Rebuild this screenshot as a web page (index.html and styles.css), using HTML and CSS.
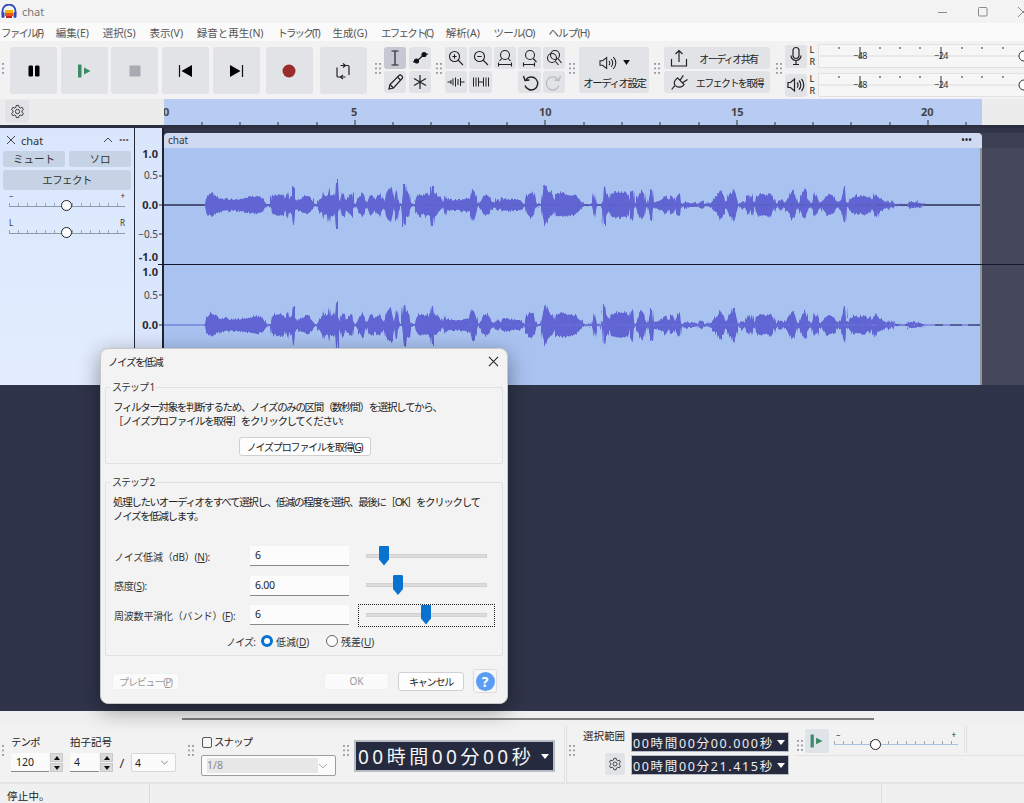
FILE: index.html
```html
<!DOCTYPE html>
<html lang="ja">
<head>
<meta charset="utf-8">
<title>chat</title>
<link rel="stylesheet" href="styles.css">
</head>
<body>
<div class="app">
  <header class="titlebar">
    <svg class="logo" viewBox="0 0 16 16"><path d="M1.5 10V7a6.5 6.5 0 0 1 13 0v3" fill="none" stroke="#2f49b8" stroke-width="1.8"/><rect x="0.5" y="8" width="3" height="6" rx="1.4" fill="#2f49b8"/><rect x="12.5" y="8" width="3" height="6" rx="1.4" fill="#2f49b8"/><rect x="4" y="6" width="8" height="3" fill="#f5b400"/><rect x="4" y="9" width="8" height="3" fill="#e8541a"/><rect x="5" y="12" width="6" height="2" fill="#c4201c"/></svg>
    <span class="title-text">chat</span>
    <div class="winctl">
      <svg width="12" height="12" viewBox="0 0 12 12"><path d="M1 6.5h9" stroke="#8a8a8a"/></svg>
      <svg width="12" height="12" viewBox="0 0 12 12"><rect x="1.5" y="1.5" width="8.500" height="8.500" rx="1" fill="none" stroke="#8a8a8a"/></svg>
      <svg width="12" height="12" viewBox="0 0 12 12"><path d="M1 1l10 10M11 1L1 11" stroke="#8a8a8a"/></svg>
    </div>
  </header>

  <nav class="menubar">
    <span class="m-k">ファイル(F)</span><span>編集(E)</span><span>選択(S)</span><span>表示(V)</span><span>録音と再生(N)</span><span class="m-k">トラック(T)</span><span>生成(G)</span><span class="m-k">エフェクト(C)</span><span>解析(A)</span><span class="m-s">ツール(O)</span><span class="m-s">ヘルプ(H)</span>
  </nav>

  <section class="toolbar">
    <i class="grip grip-first"></i>
    <div class="transport">
      <button class="tbtn"><svg viewBox="0 0 24 24" width="24" height="24"><rect x="6.500" y="6.500" width="4.500" height="11" rx="1.300"/><rect x="13" y="6.500" width="4.500" height="11" rx="1.300"/></svg></button>
      <button class="tbtn"><svg viewBox="0 0 24 24" width="24" height="24" fill="#3f8a66"><rect x="6" y="5.500" width="3.500" height="13" rx="0.500"/><path d="M12 8.500l6.500 3.500-6.500 3.500z"/></svg></button>
      <button class="tbtn"><svg viewBox="0 0 24 24" width="24" height="24"><rect x="6.500" y="6.500" width="11" height="11" fill="#a9aab4"/></svg></button>
      <button class="tbtn"><svg viewBox="0 0 24 24" width="24" height="24"><path d="M5.500 6v12" stroke="#111" stroke-width="1.200"/><path d="M18 6v12L7.500 12z" fill="#000"/></svg></button>
      <button class="tbtn"><svg viewBox="0 0 24 24" width="24" height="24"><path d="M18.500 6v12" stroke="#111" stroke-width="1.200"/><path d="M6 6v12l10.500-6z" fill="#000"/></svg></button>
      <button class="tbtn tbtn-rec"><svg viewBox="0 0 24 24" width="24" height="24"><circle cx="12" cy="12" r="6.500" fill="#9b2c2c"/></svg></button>
      <button class="tbtn tbtn-loop"><svg viewBox="0 0 24 24" width="24" height="24" fill="none" stroke="#222" stroke-width="1.200"><path d="M9.500 6.500H17a1 1 0 0 1 1 1V16M14.500 18H7a1 1 0 0 1-1-1V8.500"/><path d="M12 4.500l2.500 2-2.500 2M12 16l-2.500 2 2.500 2" stroke-width="1.100"/></svg></button>
    </div>
    <i class="grip grip-tools"></i>
    <div class="tools">
      <button class="sbtn sbtn-on"><svg viewBox="0 0 22 22" width="22" height="22" fill="none" stroke="#222" stroke-width="1.200"><path d="M7.500 4h7M11 4v14M7.500 18h7"/></svg></button>
      <button class="sbtn"><svg viewBox="0 0 22 22" width="22" height="22" fill="none" stroke="#111" stroke-width="1.200"><path d="M4 15l4-1 7-6.500 4-.5"/><circle cx="7.500" cy="14" r="2" fill="#111"/><circle cx="15" cy="7.500" r="2" fill="#111"/></svg></button>
      <button class="sbtn"><svg viewBox="0 0 22 22" width="22" height="22" fill="none" stroke="#222" stroke-width="1.200"><path d="M5 18l1-4.500L15 4.500a1.500 1.500 0 0 1 2.300 0l.8.800a1.500 1.500 0 0 1 0 2.200L9.500 17z"/><path d="M13.500 6l3 3M6 13.500L9.500 17"/></svg></button>
      <button class="sbtn"><svg viewBox="0 0 22 22" width="22" height="22" fill="none" stroke="#222" stroke-width="1.200"><path d="M11 4v14M5 7.500l12 7M17 7.500l-12 7"/></svg></button>
    </div>
    <i class="grip"></i>
    <div class="zooms">
      <button class="sbtn"><svg viewBox="0 0 22 22" width="22" height="22" fill="none" stroke="#222" stroke-width="1.100"><circle cx="9.500" cy="9.500" r="5"/><path d="M13 13l5 5M7.300 9.500h4.400M9.500 7.300v4.400"/></svg></button>
      <button class="sbtn"><svg viewBox="0 0 22 22" width="22" height="22" fill="none" stroke="#222" stroke-width="1.100"><circle cx="9.500" cy="9.500" r="5"/><path d="M13 13l5 5M7.300 9.500h4.400"/></svg></button>
      <button class="sbtn"><svg viewBox="0 0 22 22" width="22" height="22" fill="none" stroke="#222" stroke-width="1.100"><circle cx="11" cy="8" r="4.500"/><path d="M7.800 11.500L5.500 14M14.200 11.500l2.300 2.500M4.500 17.500h13M4.500 15.500v4M17.500 15.500v4"/></svg></button>
      <button class="sbtn"><svg viewBox="0 0 22 22" width="22" height="22" fill="none" stroke="#222" stroke-width="1.100"><circle cx="11" cy="8" r="4.500"/><path d="M14.200 11.500l3.300 3.500M4.500 17.500h11M4.500 15.500v4M15.500 15.500v4"/></svg></button>
      <button class="sbtn"><svg viewBox="0 0 22 22" width="22" height="22" fill="none" stroke="#222" stroke-width="1.100"><circle cx="12" cy="8" r="4.500"/><circle cx="9" cy="11" r="4.500"/><path d="M15 11.500l3.500 4.500M12.500 14.500l3 3.500"/></svg></button>
      <button class="sbtn"><svg viewBox="0 0 22 22" width="22" height="22" fill="none" stroke="#222" stroke-width="1"><path d="M2.500 11h3.500M6 9v4M8 7.500v7M10.500 6.500v9M13 8v6M15.500 7v8M15.500 11h4"/></svg></button>
      <button class="sbtn"><svg viewBox="0 0 22 22" width="22" height="22" fill="none" stroke="#222" stroke-width="1"><path d="M3.500 6.500v9M6 6.500v9M8.500 6.500v9M8.500 11h5M13.500 6.500v9M16 6.500v9M18.500 6.500v9"/></svg></button>
      <span class="sbtn-empty"></span>
      <button class="sbtn"><svg viewBox="0 0 22 22" width="22" height="22" fill="none" stroke="#222" stroke-width="1.400"><path d="M7 8.500a6.500 6.500 0 1 1-1 6M4.500 5l1.500 4.500 4.500-.5"/></svg></button>
      <button class="sbtn"><svg viewBox="0 0 22 22" width="22" height="22" fill="none" stroke="#b9bac0" stroke-width="1.300"><path d="M15 8.500a6.500 6.500 0 1 0 1 6M17.500 5L16 9.500 11.500 9"/></svg></button>
    </div>
    <i class="grip"></i>
    <button class="audio-setup">
      <span class="audio-icon"><svg viewBox="0 0 22 18" width="20" height="16" fill="none" stroke="#222" stroke-width="1.200"><path d="M2 6.500h3L9.500 3v12L5 11.500H2z"/><path d="M12 6.500a3.500 3.500 0 0 1 0 5M14.500 4.500a6.500 6.500 0 0 1 0 9M17 2.500a9 9 0 0 1 0 13"/></svg><svg viewBox="0 0 8 6" width="7" height="5"><path d="M0 0h8L4 6z" fill="#111"/></svg></span>
      <span class="audio-label">オーディオ設定</span>
    </button>
    <i class="grip"></i>
    <div class="share">
      <button class="wbtn"><svg viewBox="0 0 18 20" width="18" height="20" fill="none" stroke="#222" stroke-width="1.200"><path d="M1.500 11v7h15v-7M9 14V3M5.500 6L9 2.500 12.500 6"/></svg><span>オーディオ共有</span></button>
      <button class="wbtn"><svg viewBox="0 0 24 20" width="20" height="18" fill="none" stroke="#222" stroke-width="1.400"><path d="M6 14C3 10 7 7 9 5l8 8c-2 3-7 5-11 1zM12 8l4-6M15 11l6-4M6 14l-4 5"/></svg><span>エフェクトを取得</span></button>
    </div>
    <i class="grip grip-meter"></i>
    <div class="meters">
      <div class="meter-row">
        <button class="mbtn"><svg viewBox="0 0 22 22" width="22" height="22" fill="none" stroke="#222" stroke-width="1.200"><rect x="8" y="2.500" width="6" height="11" rx="3"/><path d="M6 10.500a5 5 0 0 0 10 0M11 15.500v4M8 19.500h6"/></svg></button>
        <span class="lr"><b>L</b><b>R</b></span>
        <svg class="meter" viewBox="0 0 207 24"><rect x="0.500" y="0.500" width="210" height="23" fill="#f6f6f6" stroke="#e2e2e2"/><path d="M0 12h207" stroke="#dcdcdc"/><path d="M21 3v2M62 3v2M82 3v2M102 3v2M144 3v2M164 3v2M185 3v2M42 3v12M123 3v12" stroke="#333"/><text x="42" y="15" class="mtext" text-anchor="middle">−48</text><text x="123" y="15" class="mtext" text-anchor="middle">−24</text><circle cx="206" cy="12" r="5" fill="#fff" stroke="#333"/></svg>
      </div>
      <div class="meter-row meter-row-b">
        <button class="mbtn"><svg viewBox="0 0 22 22" width="22" height="22" fill="none" stroke="#222" stroke-width="1.200"><path d="M3 8.500h2.500L9.500 5v12l-4-3.500H3z"/><path d="M12 8.500a3.500 3.500 0 0 1 0 5M14 6.500a6.500 6.500 0 0 1 0 9M16.500 5a9 9 0 0 1 0 12"/></svg></button>
        <span class="lr"><b>L</b><b>R</b></span>
        <svg class="meter" viewBox="0 0 207 24"><rect x="0.500" y="0.500" width="210" height="23" fill="#f6f6f6" stroke="#e2e2e2"/><path d="M0 12h207" stroke="#dcdcdc"/><path d="M21 3v2M62 3v2M82 3v2M102 3v2M144 3v2M164 3v2M185 3v2M42 3v12M123 3v12" stroke="#333"/><text x="42" y="15" class="mtext" text-anchor="middle">−48</text><text x="123" y="15" class="mtext" text-anchor="middle">−24</text><circle cx="206" cy="12" r="5" fill="#fff" stroke="#333"/></svg>
      </div>
    </div>
  </section>

  <section class="timeline">
    <div class="timeline-left">
      <button class="gear-btn"><svg viewBox="0 0 16 16" width="15" height="15" fill="none" stroke="#333" stroke-width="1"><path d="M6.700 1.500h2.600l.4 2 1.400.8 1.900-.7 1.300 2.300-1.500 1.300v1.600l1.500 1.300-1.300 2.300-1.900-.7-1.400.8-.4 2H6.700l-.4-2-1.400-.8-1.900.7-1.300-2.300L3.200 8.800V7.200L1.700 5.900 3 3.600l1.900.7 1.400-.8z"/><circle cx="8" cy="8" r="2.300"/></svg></button>
    </div>
    <svg class="time-ruler" viewBox="164 99 818 26">
      <g class="rtext"><text x="163" y="116">0</text><text x="351" y="116">5</text><text x="539" y="116">10</text><text x="731" y="116">15</text><text x="921" y="116">20</text></g>
      <path stroke="#333" d="M202 122v3M240 122v3M278 122v3M317 122v3M355 120v5M393 122v3M431 122v3M469 122v3M507 122v3M545 120v5M584 122v3M622 122v3M660 122v3M699 122v3M737 120v5M775 122v3M813 122v3M851 122v3M890 122v3M928 120v5M966 122v3"/>
    </svg>
    <div class="timeline-right"></div>
  </section>

  <div class="band"></div>

  <section class="tracks">
    <aside class="track-panel">
      <div class="track-head">
        <svg viewBox="0 0 10 10" width="10" height="10"><path d="M1 1l8 8M9 1l-8 8" stroke="#444"/></svg>
        <span class="track-name">chat</span>
        <svg class="track-up" viewBox="0 0 10 6" width="10" height="6"><path d="M1 5l4-4 4 4" fill="none" stroke="#444"/></svg>
        <span class="track-more">···</span>
      </div>
      <div class="track-btns"><button class="pbtn">ミュート</button><button class="pbtn">ソロ</button></div>
      <button class="pbtn pbtn-wide">エフェクト</button>
      <div class="pan-label pan-first"><span>−</span><span>+</span></div>
      <div class="pan-slider"><i class="pan-thumb"></i></div>
      <div class="pan-label pan-second"><span>L</span><span>R</span></div>
      <div class="pan-slider"><i class="pan-thumb"></i></div>
    </aside>
    <svg class="v-ruler" viewBox="135 128 27 257">
      <g class="vb"><text x="158" y="158">1.0</text><text x="158" y="209">0.0</text><text x="158" y="261">-1.0</text><text x="158" y="276">1.0</text><text x="158" y="329">0.0</text></g>
      <g class="vt"><text x="158" y="179">0.5</text><text x="158" y="238">−0.5</text><text x="158" y="299">0.5</text></g>
      <path stroke="#333" d="M159 176h3M159 205h3M159 234h3M159 295h3M159 325h3"/>
    </svg>
    <div class="clip">
      <div class="clip-head"><span>chat</span><b>•••</b></div>
      <svg class="wave" viewBox="164 148 818 237">
        <defs>
          <filter id="jagA" x="0" y="-20%" width="100%" height="140%"><feTurbulence type="fractalNoise" baseFrequency="0.7 0.002" numOctaves="2" seed="3"/><feDisplacementMap in="SourceGraphic" scale="6" xChannelSelector="R" yChannelSelector="G"/></filter>
          <filter id="jagB" x="0" y="-20%" width="100%" height="140%"><feTurbulence type="fractalNoise" baseFrequency="0.7 0.002" numOctaves="2" seed="11"/><feDisplacementMap in="SourceGraphic" scale="6" xChannelSelector="R" yChannelSelector="G"/></filter>
          <polygon id="env" points="204,0 205,-1 206,-7 207,-8 209,-10 212,-12 215,-9 218,-7 224,-6 232,-5.500 240,-6 246,-7 252,-8 257,-9 260,-8 263,-6 265,-3 267,-0.500 270,-0.500 271,-2 272,-9 276,-10 281,-11 284,-10 285,-5 287,-11 288,-14 289,-6 291,-9 292,-10 293,-19 294,-19 295,-6 297,-4 300,-6 304,-8 306,-9 308,-9 310,-7 312,-5 314,-2 316,-0.500 318,-2 319,-5 322,-8 323,-15 324,-11 326,-9 328,-11 329,-18 330,-10 332,-10 334,-12 335,-8 336,-24 337,-24 338,-8 340,-3 342,-12 344,-11 345,-5 347,-6 350,-10 352,-12 353,-4 355,-0.500 357,-3 359,-8 361,-10 362,-13 364,-10 365,-5 367,-2 369,-8 371,-11 373,-9 375,-5 377,-9 379,-10 380,-12 381,-8 382,-6 384,-3 385,-6 386,-12 388,-16 391,-17 392,-12 394,-2 396,-15 397,-15 398,-5 400,-1 402,-1 404,-21 405,-21 406,-12 408,-13 409,-12 410,-3 413,-1 415,-1 416,-6 418,-10 420,-11 423,-9 426,-11 429,-9 431,-12 432,-20 433,-20 434,-10 436,-11 438,-8 440,-6 443,-2 444,-6 445,-10 446,-6 452,-5 460,-5 465,-6 467,-7 470,-6 472,-16 474,-15 476,-8 478,-0.500 481,-4 483,-9 486,-11 489,-9 491,-4 494,-2 498,-6 501,-2 502,-6 508,-6 515,-5 520,-5 522,-3 524,-0.500 526,-4 527,-9 529,-12 532,-13 534,-10 535,-4 537,-1 541,-1 542,-5 543,-12 545,-21 547,-17 549,-13 551,-11 553,-9 555,-4 556,-11 558,-11 562,-12 566,-11 571,-10 575,-10 578,-7 580,-5 582,-2 585,-0.500 590,-1 592,-1 593,-6 594,-12 595,-6 596,-1 601,-0.500 603,-4 604,-20 605,-20 606,-12 608,-8 610,-5 611,-12 613,-11 615,-13 617,-12 620,-13 623,-12 626,-13 628,-9 629,-2 631,-14 633,-16 634,-2 636,-1 638,-8 640,-12 642,-15 644,-12 645,-4 648,-1 651,-16 652,-16 653,-3 655,-3 658,-4 660,-5 663,-6 665,-10 667,-7 669,-4 671,-10 673,-8 675,-3 676,-7 678,-10 680,-12 681,-2 683,-1 685,-3 690,-2 695,-2 698,-1 700,-3 702,-4 704,-1 711,-2 713,-5 715,-7 717,-8 719,-13 720,-16 722,-11 724,-9 725,-3 727,-5 729,-11 732,-12 733,-17 734,-17 736,-10 737,-6 738,-1 740,-2 743,-4 745,-2 747,-8 749,-10 750,-4 752,-11 753,-4 755,-1 756,-8 760,-11 764,-10 767,-9 770,-12 772,-8 774,-3 775,-7 776,-2 778,-2 780,-5 782,-4 784,-2 786,-4 788,-7 790,-10 792,-15 795,-11 797,-3 799,-2 802,-10 805,-15 807,-8 809,-3 812,-2 814,-12 816,-8 817,-10 819,-3 821,-2 823,-5 826,-9 829,-10 832,-9 834,-8 836,-4 838,-2 841,-5 844,-18 845,-18 846,-3 848,-2 850,-6 853,-8 856,-9 859,-8 862,-9 865,-10 868,-6 870,-9 872,-4 875,-10 876,-12 877,-8 880,-6 883,-5 885,-3 887,-2 888,-5 889,-3 892,-2 893,-4 894,-1 907,-0.500 908,-2 912,-3 920,-2 925,-0.500"/>
        </defs>
        <path class="center-dark" d="M164 205h818"/>
        <path class="center-blue" d="M164 325h818"/>
        <path class="center-dash" d="M895 325h4M905 325h6M918 325h5M935 325h8M950 325h12M968 325h14"/>
        <g class="wf">
          <g filter="url(#jagA)"><use href="#env" transform="translate(0 205)"/></g>
          <g filter="url(#jagB)"><use href="#env" transform="translate(0 205) scale(1 -1)"/></g>
          <g filter="url(#jagB)"><use href="#env" transform="translate(0 325)"/></g>
          <g filter="url(#jagA)"><use href="#env" transform="translate(0 325) scale(1 -1)"/></g>
          <use href="#env" transform="translate(0 205) scale(1 .92)"/>
          <use href="#env" transform="translate(0 205) scale(1 -.92)"/>
          <use href="#env" transform="translate(0 325) scale(1 .92)"/>
          <use href="#env" transform="translate(0 325) scale(1 -.92)"/>
        </g>
      </svg>
    </div>
    <div class="clip-edge"></div>
    <div class="track-rest"></div>
    <i class="chan-line"></i>
  </section>

  <main class="workspace"></main>

  <div class="scroll-row"><i class="scroll-thumb"></i></div>

  <section class="bottom">
    <i class="grip grip-first grip-b"></i>
    <div class="field field-tempo">
      <label>テンポ</label>
      <div class="field-row"><span class="input input-tempo">120</span><span class="spin"><i class="up"></i><i class="down"></i></span></div>
    </div>
    <div class="field field-sign">
      <label>拍子記号</label>
      <div class="field-row"><span class="input input-num">4</span><span class="spin"><i class="up"></i><i class="down"></i></span><span class="slash">/</span>
        <span class="select select-four">4<svg viewBox="0 0 10 6" width="9" height="5"><path d="M1 1l4 4 4-4" fill="none" stroke="#777"/></svg></span></div>
    </div>
    <i class="grip grip-b grip-snap"></i>
    <div class="field field-snap">
      <div class="snap-check"><i class="checkbox"></i><label>スナップ</label></div>
      <span class="select select-snap"><em>1/8</em><svg viewBox="0 0 10 6" width="10" height="6"><path d="M1 1l4 4 4-4" fill="none" stroke="#aaa"/></svg></span>
    </div>
    <i class="grip grip-b grip-time"></i>
    <div class="bigtime"><span>00時間00分00秒</span><i class="caret"></i></div>
    <i class="vsep"></i>
    <i class="grip grip-b grip-sel"></i>
    <div class="sel-labels">
      <label>選択範囲</label>
      <button class="gear-btn gear-small"><svg viewBox="0 0 16 16" width="14" height="14" fill="none" stroke="#333" stroke-width="1"><path d="M6.700 1.500h2.600l.4 2 1.400.8 1.900-.7 1.300 2.300-1.500 1.300v1.600l1.500 1.300-1.300 2.300-1.900-.7-1.400.8-.4 2H6.700l-.4-2-1.400-.8-1.900.7-1.300-2.300L3.200 8.800V7.200L1.700 5.900 3 3.600l1.900.7 1.400-.8z"/><circle cx="8" cy="8" r="2.300"/></svg></button>
    </div>
    <div class="sel-times">
      <div class="smalltime"><span>00時間00分00.000秒</span><i class="caret"></i></div>
      <div class="smalltime"><span>00時間00分21.415秒</span><i class="caret"></i></div>
    </div>
    <div class="play-area">
      <div class="play-row">
        <i class="grip grip-play"></i>
        <button class="play-btn"><svg viewBox="0 0 24 24" width="22" height="22" fill="#3f8a66"><rect x="5" y="5" width="3.500" height="14"/><path d="M11 8.500l7 3.500-7 3.500z"/></svg></button>
        <div class="speed">
          <div class="speed-label"><span>−</span><span>+</span></div>
          <div class="pan-slider speed-slider"><i class="pan-thumb"></i></div>
        </div>
        <i class="vsep vsep-play"></i>
      </div>
    </div>
  </section>

  <footer class="status">
    <span class="status-a">停止中。</span><span class="status-b"></span><span class="status-c"></span>
  </footer>

  <div class="dialog">
    <div class="dlg-title"><span>ノイズを低減</span><svg viewBox="0 0 12 12" width="11" height="11"><path d="M1 1l10 10M11 1L1 11" stroke="#222" stroke-width="1.100"/></svg></div>
    <div class="dlg-body">
      <fieldset class="step step-1">
        <legend>ステップ 1</legend>
        <p>フィルター対象を判断するため、ノイズのみの区間（数秒間）を選択してから、<br>［ノイズプロファイルを取得］をクリックしてください:</p>
        <div class="center"><button class="dbtn dbtn-profile">ノイズプロファイルを取得(<u>G</u>)</button></div>
      </fieldset>
      <fieldset class="step step-2">
        <legend>ステップ 2</legend>
        <p>処理したいオーディオをすべて選択し、低減の程度を選択、最後に［OK］をクリックして<br>ノイズを低減します。</p>
        <div class="param param-first">
          <label>ノイズ低減（dB）(<u>N</u>):</label><span class="dinput">6</span>
          <div class="dslider"><i class="dtrack"></i><i class="dthumb" style="left:20px"></i></div>
        </div>
        <div class="param">
          <label>感度(<u>S</u>):</label><span class="dinput">6.00</span>
          <div class="dslider"><i class="dtrack"></i><i class="dthumb" style="left:34px"></i></div>
        </div>
        <div class="param">
          <label>周波数平滑化（バンド）(<u>F</u>):</label><span class="dinput">6</span>
          <div class="dslider dslider-focus"><i class="dtrack"></i><i class="dthumb" style="left:62px"></i></div>
        </div>
        <div class="radios">
          <span class="radio-label">ノイズ:</span>
          <i class="radio radio-on"></i><label>低減(<u>D</u>)</label>
          <i class="radio"></i><label>残差(<u>U</u>)</label>
        </div>
      </fieldset>
      <div class="dlg-foot">
        <button class="dbtn dbtn-preview" disabled>プレビュー(<u>P</u>)</button>
        <button class="dbtn dbtn-ok" disabled>OK</button>
        <button class="dbtn dbtn-cancel">キャンセル</button>
        <button class="dbtn-help"><span>?</span></button>
      </div>
    </div>
  </div>
</div>
</body>
</html>
```
FILE: styles.css
```css
* { box-sizing: border-box; }
html, body { margin: 0; padding: 0; }
body { font-family: "Noto Sans", "Noto Sans CJK JP", sans-serif; color: #222; }
button { font: inherit; color: inherit; padding: 0; border: 0; }
i { display: block; font-style: normal; }
.app { position: relative; width: 1024px; height: 803px; overflow: hidden; display: flex; flex-direction: column; background: #f0f0f0; }

.titlebar { height: 23px; flex: none; background: #f3f3f3; display: flex; align-items: center; padding-left: 1px; }
.logo { width: 16px; height: 16px; }
.title-text { margin-left: 5px; font-size: 11px; color: #777; }
.winctl { margin-left: auto; display: flex; gap: 28px; margin-right: -5px; }

.menubar { height: 18px; flex: none; background: #fafafa; display: flex; align-items: center; gap: 13.700px; padding-left: 1px; font-size: 10.500px; color: #555; white-space: nowrap; }
.m-k { letter-spacing: -1.800px; }
.m-s { letter-spacing: -0.800px; }

.toolbar { height: 58px; flex: none; display: flex; align-items: flex-start; padding-top: 6px; background: #f2f2f2; }
.grip { flex: none; width: 6px; height: 13px; margin: 16px 3px 0 5px; background-image: radial-gradient(circle at 1px 1px, #9c9fa6 1px, transparent 1.100px); background-size: 4px 4.500px; }
.grip-first { margin: 16px 3px 0 0; width: 4px; height: 13px; margin-left: 2px; background-size: 4px 4.500px; }
.grip-tools { margin-left: 8px; }
.transport { display: flex; gap: 3.700px; margin-left: 1px; }
.tbtn { width: 47px; height: 47px; background: #e2e3e7; border-radius: 3px; display: flex; align-items: center; justify-content: center; }
.tbtn-rec { margin-left: 2.500px; }
.tbtn-loop { margin-left: 3.300px; }
.tools { display: grid; grid-template-columns: 22px 22px; grid-auto-rows: 22px; gap: 2px 3px; }
.zooms { display: grid; grid-template-columns: repeat(5, 22.500px); grid-auto-rows: 22px; gap: 2px; margin-right: -1px; }
.sbtn { width: 100%; height: 22px; background: #e2e3e7; border-radius: 3px; display: flex; align-items: center; justify-content: center; }
.sbtn-on { background: #c6c9d3; }
.audio-setup { width: 70px; height: 46px; background: #e2e3e7; border-radius: 3px; display: flex; flex-direction: column; align-items: center; margin-left: 1px; padding-top: 7px; gap: 5px; }
.audio-icon { display: flex; align-items: center; gap: 5px; height: 17px; }
.audio-label { font-size: 10.500px; letter-spacing: -1.500px; white-space: nowrap; line-height: 14px; }
.share { display: flex; flex-direction: column; gap: 2px; margin-left: 1px; }
.wbtn { width: 106px; height: 22px; background: #e2e3e7; border-radius: 3px; display: flex; align-items: center; padding: 0 2px 0 6px; font-size: 10px; letter-spacing: -1.600px; white-space: nowrap; }
.wbtn span { flex: 1; text-align: center; }
.grip-meter { margin-left: 6px; }
.meters { display: flex; flex-direction: column; margin-top: -3px; flex: 1; min-width: 0; }
.meter-row { display: flex; align-items: center; height: 24px; }
.meter-row-b { margin-top: 5px; }
.mbtn { width: 22px; height: 23px; background: #e2e3e7; border-radius: 3px; display: flex; align-items: center; justify-content: center; flex: none; }
.lr { width: 9px; flex: none; display: flex; flex-direction: column; margin-left: 2px; font-size: 9px; line-height: 12px; }
.lr b { font-weight: 400; }
.meter { width: 207px; height: 24px; flex: none; }
.mtext { font-size: 9px; letter-spacing: -0.500px; fill: #333; font-family: "Noto Sans", sans-serif; }

.timeline { height: 26px; flex: none; display: flex; background: #ececec; }
.timeline-left { width: 164px; flex: none; padding: 1px 0 0 5px; }
.gear-btn { width: 24px; height: 23px; background: #e2e3e7; border-radius: 3px; display: flex; align-items: center; justify-content: center; }
.time-ruler { width: 818px; height: 26px; flex: none; background: #b8cbf2; }
.rtext { font-size: 11px; font-weight: 700; fill: #444; font-family: "Noto Sans", sans-serif; }
.timeline-right { flex: 1; }
.band { height: 3px; flex: none; background: #2b2f40; }

.tracks { position: relative; height: 257px; flex: none; display: flex; background: #30354a; }
.track-panel { width: 135px; flex: none; background: linear-gradient(180deg, #d9e6fc, #e3edff); border-right: 1px solid #262a36; padding: 4px 3px 0; }
.track-head { display: flex; align-items: center; height: 16px; padding: 0 2px 0 3px; }
.track-name { font-size: 11px; margin-left: 5px; color: #333; }
.track-up { margin-left: auto; }
.track-more { margin-left: 6px; font-size: 12px; line-height: 10px; color: #555; font-weight: 700; }
.track-btns { display: flex; gap: 4px; margin-top: 3px; }
.pbtn { flex: 1; height: 16px; background: #c5d3e4; border-radius: 3px; font-size: 10.500px; line-height: 15px; color: #333; }
.pbtn-wide { display: block; width: 128px; height: 20px; margin-top: 3px; line-height: 19px; letter-spacing: -0.600px; }
.pan-label { display: flex; justify-content: space-between; padding: 0 6px; font-size: 8px; line-height: 8px; color: #333; }
.pan-first { margin-top: 2px; }
.pan-second { margin-top: 12px; }
.pan-slider { position: relative; height: 6px; margin: 1px 3px 0 6px; border-bottom: 1px solid #8d9aac; background-image: repeating-linear-gradient(90deg, #9aa6b6 0 1px, transparent 1px 9px); background-size: 100% 3px; background-position: bottom; background-repeat: no-repeat; width: 116px; }
.pan-thumb { position: absolute; left: 52px; top: -1px; width: 11px; height: 11px; border-radius: 50%; background: #fff; border: 1.200px solid #222; }
.v-ruler { width: 27px; height: 257px; flex: none; background: #dae6fc; }
.vb { font-size: 11px; font-weight: 700; fill: #2a2a30; text-anchor: end; font-family: "Noto Sans", sans-serif; }
.vt { font-size: 10px; fill: #444; text-anchor: end; font-family: "Noto Sans", sans-serif; }
.clip { width: 820px; flex: none; padding-top: 5px; display: flex; flex-direction: column; border-left: 2px solid #1f2330; }
.clip-head { height: 15px; flex: none; background: #d0d9f2; border-radius: 4px 4px 0 0; display: flex; align-items: center; justify-content: space-between; padding: 0 10px 2px 4px; font-size: 10px; color: #333; }
.clip-head b { font-size: 8px; letter-spacing: 0.500px; color: #222; }
.wave { width: 818px; height: 237px; display: block; background: #a9c3f1; }
.center-dark { stroke: #2c2c52; stroke-width: 1.500; }
.center-blue { stroke: #5f63d0; stroke-width: 1; }
.center-dash { stroke: #2c2c52; stroke-width: 1; }
.wf { fill: #6065d3; }
.clip-edge { width: 2px; flex: none; margin-top: 20px; background: #8f939e; margin-left: -2px; }
.track-rest { flex: 1; background: linear-gradient(180deg, #30354a 0 5px, #3d4052 5px 20px, #45485a 20px); }
.chan-line { position: absolute; left: 158px; right: 0; top: 136px; height: 1px; background: #15182a; }

.workspace { flex: 1; background: #30344a; }
.scroll-row { height: 15px; flex: none; background: #f0f0f0; padding: 7px 0 0 182px; }
.scroll-thumb { width: 692px; height: 2px; background: #7d7d7d; }

.bottom { height: 58px; flex: none; display: flex; align-items: flex-start; background: #f2f2f2; border-bottom: 2px solid #e4e4e4; font-size: 10.500px; }
.grip-b { margin-top: 19px; }
.field { display: flex; flex-direction: column; }
.field label { height: 16px; line-height: 16px; white-space: nowrap; }
.field-tempo label { letter-spacing: -1px; }
.field-sign label { letter-spacing: 0; }
.field-row { display: flex; align-items: center; margin-top: 3px; height: 19px; }
.field-tempo { margin: 8px 0 0 2px; width: 59px; }
.field-sign { margin: 8px 0 0 0; width: 107px; }
.input { background: #fbfbfb; height: 19px; line-height: 19px; border-bottom: 1px solid #8a8a8a; font-size: 10.500px; }
.input-tempo { width: 38px; padding-left: 5px; }
.input-num { width: 29px; padding-left: 4px; }
.spin { width: 13px; height: 19px; margin-left: 1px; display: flex; flex-direction: column; gap: 1px; }
.spin i { flex: 1; background: #d9dadd; position: relative; border: 1px solid #c9c9c9; }
.spin .up::after, .spin .down::after { content: ""; position: absolute; left: 2.500px; top: 2px; border: 3px solid transparent; border-top: 0; border-bottom: 4px solid #111; }
.spin .down::after { border-bottom: 0; border-top: 4px solid #111; }
.slash { width: 18px; text-align: center; font-size: 13px; color: #333; }
.select { display: flex; align-items: center; justify-content: space-between; background: #fbfbfb; border: 1px solid #d8d8d8; border-radius: 2px; }
.select-four { width: 45px; height: 19px; padding: 0 6px 0 3px; }
.grip-snap { margin-left: 11px; margin-right: 7px; }
.field-snap { width: 135px; margin-top: 8px; }
.snap-check { display: flex; align-items: center; height: 16px; gap: 2px; }
.snap-check label { letter-spacing: -1px; }
.checkbox { width: 10px; height: 11px; margin-left: 1px; border: 1px solid #555; border-radius: 2px; background: #f7f7f7; }
.select-snap { height: 21px; margin-top: 5px; padding: 0 7px 0 5px; border-color: #9d9d9d; color: #8a8a8a; }
.select-snap em { font-style: normal; width: 112px; background: #e7e7e7; line-height: 15px; }
.grip-time { margin-left: 7px; margin-right: 5px; }
.bigtime { width: 201px; height: 32px; margin-top: 14px; background: #262a3f; border: 2px solid #b9bcc4; display: flex; align-items: center; justify-content: space-between; color: #f5f5f5; padding: 0 4px 0 2px; font-size: 19px; letter-spacing: 3.500px; white-space: nowrap; overflow: hidden; }
.caret { flex: none; width: 0; height: 0; border: 4.500px solid transparent; border-bottom: 0; border-top: 5px solid #fff; }
.vsep { width: 3px; height: 58px; flex: none; margin-left: 9px; background: linear-gradient(90deg, #e0e0e0 0 1px, #f8f8f8 1px 2px, #dcdcdc 2px); }
.grip-sel { margin: 19px 7px 0 2px; }
.sel-labels { width: 43px; flex: none; margin-top: 2px; display: flex; flex-direction: column; align-items: flex-end; }
.sel-labels label { height: 17px; line-height: 17px; white-space: nowrap; }
.gear-small { width: 20px; height: 22px; margin-top: 8px; }
.sel-times { margin: 6px 0 0 6px; display: flex; flex-direction: column; gap: 3px; }
.smalltime { width: 158px; height: 20px; background: #262a3f; border: 1.500px solid #b9bcc4; color: #eee; display: flex; align-items: center; justify-content: space-between; font-size: 12.500px; letter-spacing: 1.650px; padding: 0 3px 0 1px; white-space: nowrap; overflow: hidden; }
.play-area { flex: 1; margin-left: 6px; min-width: 0; }
.play-row { display: flex; height: 30px; align-items: flex-start; border-bottom: 1px solid #e3e3e3; padding-top: 3px; }
.grip-play { margin: 11px 2px 0 2px; width: 6px; height: 13px; }
.play-btn { width: 24px; height: 24px; background: #dfe3ea; border-radius: 3px; display: flex; align-items: center; justify-content: center; }
.speed { width: 124px; margin-left: 5px; }
.speed-label { display: flex; justify-content: space-between; font-size: 8px; line-height: 8px; padding: 0 2px; margin-top: 2px; }
.speed-slider { width: 124px; margin: 1px 0 0; border-bottom-color: #a8c1de; height: 5px; }
.speed-slider .pan-thumb { left: 36px; top: -1px; }
.vsep-play { margin-left: 6px; height: 27px; margin-top: -3px; }

.status { height: 19px; flex: none; display: flex; font-size: 10.500px; line-height: 24px; background: #f0f0f0; overflow: hidden; }
.status-a { width: 150px; padding-left: 7px; border-right: 1px solid #dcdcdc; letter-spacing: 0.200px; }
.status-b { width: 732px; border-right: 1px solid #dcdcdc; }

.dialog { position: absolute; left: 100px; top: 348px; width: 408px; height: 356px; background: #f3f3f3; border: 1px solid #c8c8c8; border-radius: 8px; box-shadow: 0 6px 22px rgba(0, 0, 0, 0.4); font-size: 10px; letter-spacing: -0.800px; color: #222; }
.dlg-title { height: 25px; display: flex; align-items: center; justify-content: space-between; padding: 0 8px 0 7px; font-size: 10.500px; letter-spacing: -1.400px; }
.dlg-body { padding: 6px 4px 0; }
.step { margin: 0; padding: 0 7px; border: 1px solid #e0e0e0; border-radius: 2px; min-width: 0; }
.step legend { padding: 0 2px; margin-left: -3px; height: 14px; line-height: 14px; font-size: 10px; color: #333; letter-spacing: -1px; white-space: pre; }
.step p { margin: 0; padding-top: 6px; line-height: 14px; white-space: nowrap; font-size: 10.500px; letter-spacing: -1.350px; }
.step-1 { height: 84px; }
.step-2 { height: 181px; margin-top: 11px; }
.center { text-align: center; margin-top: 9px; }
.dbtn { height: 19px; background: #fdfdfd; border: 1px solid #d0d0d0; border-radius: 3px; font-size: 10px; letter-spacing: -1.150px; white-space: nowrap; }
.dbtn-profile { width: 132px; margin-left: 1px; }
.param { display: flex; align-items: center; height: 20px; margin: 9.500px 0 0 1px; }
.param-first { margin-top: 23px; }
.param label { width: 136px; flex: none; white-space: nowrap; color: #333; letter-spacing: -0.200px; }
.dinput { width: 99px; height: 20px; line-height: 19px; padding-left: 5px; background: #fcfcfc; border-bottom: 1px solid #8a8a8a; flex: none; font-size: 10.500px; letter-spacing: -0.300px; }
.dslider { position: relative; width: 135px; height: 21px; margin-left: 10px; flex: none; }
.dslider-focus { outline: 1px dotted #222; }
.dtrack { position: absolute; left: 7px; right: 7px; top: 8px; height: 4px; background: #dcdcdc; border: 1px solid #d2d2d2; }
.dthumb { position: absolute; top: 0; width: 10px; height: 20px; background: #0a72cf; clip-path: polygon(0 1px, 1px 0, 9px 0, 10px 1px, 10px 14px, 5px 20px, 0 14px); }
.radios { display: flex; align-items: center; height: 18px; margin: 7px 0 0 113px; color: #333; }
.radio-label { width: 35px; }
.radio { width: 12px; height: 12px; flex: none; border-radius: 50%; border: 1px solid #666; background: #fafafa; }
.radio-on { border: 3.500px solid #0a72cf; background: #fff; }
.radios label { margin-left: 3px; width: 50px; letter-spacing: 0; }
.dlg-foot { display: flex; align-items: center; height: 24px; margin-top: 13px; padding-left: 7px; }
.dbtn-preview { width: 67px; height: 17px; color: #9a9a9a; border-color: #f0f0f0; background: #fbfbfb; }
.dbtn-ok { width: 65px; height: 17px; margin-left: 145px; color: #9a9a9a; border-color: #f0f0f0; background: #fbfbfb; letter-spacing: 0; }
.dbtn-cancel { width: 66px; margin-left: 9px; }
.dbtn-help { width: 24px; height: 24px; margin-left: 9px; background: #f7f7f7; border: 1px solid #dcdcdc; border-radius: 3px; display: flex; align-items: center; justify-content: center; }
.dbtn-help span { width: 19px; height: 19px; border-radius: 50%; background: #5b9cf5; color: #fff; font-size: 14px; font-weight: 700; line-height: 19px; letter-spacing: 0; text-align: center; display: block; }
```
